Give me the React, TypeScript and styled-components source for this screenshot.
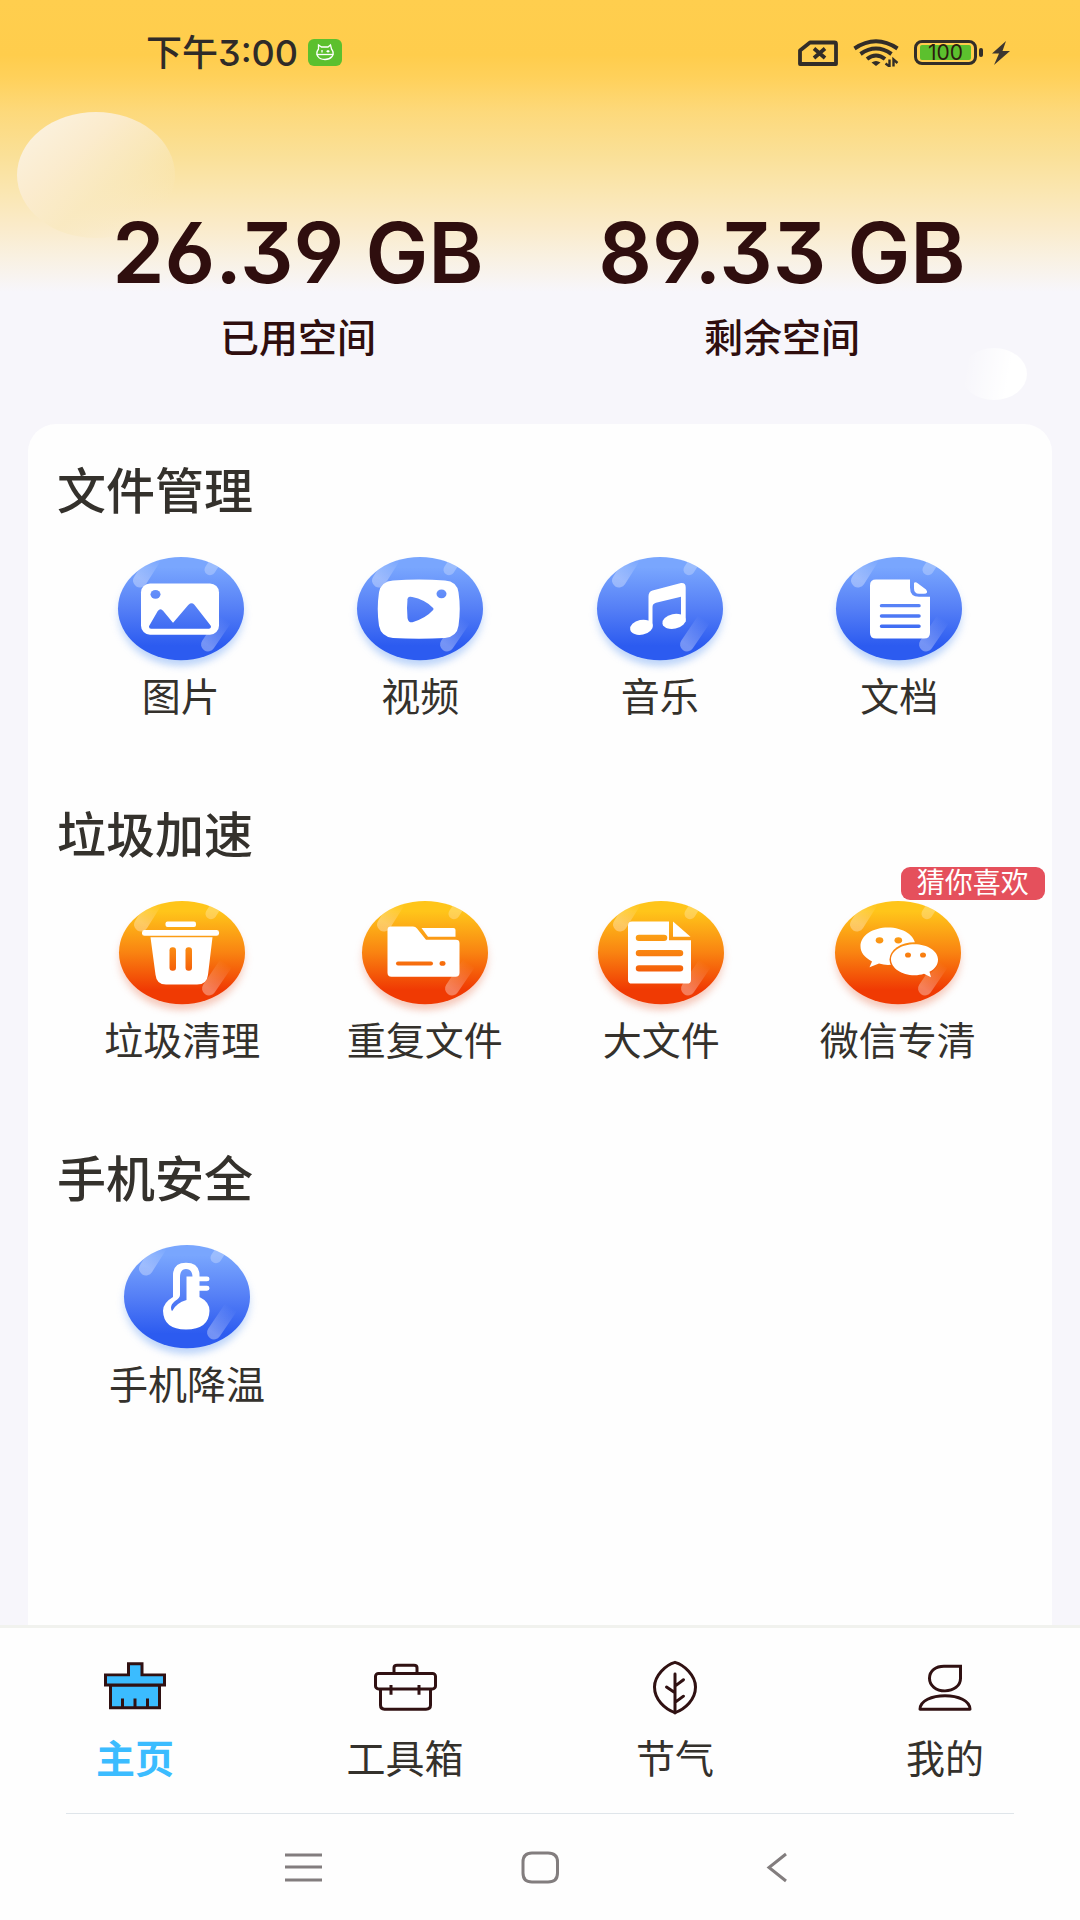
import React, { useId } from 'react';
import styled, { createGlobalStyle } from 'styled-components';

const GlobalStyle = createGlobalStyle`
  *, *::before, *::after { box-sizing: border-box; }
  body {
    margin: 0;
    background: #f7f6fb;
    color: #34312c;
    font-family: Inter, "Noto Sans CJK SC", sans-serif;
  }
  button { font: inherit; color: inherit; background: none; border: 0; padding: 0; cursor: pointer; }
  svg { display: block; }
`;

/* ---------- layout ---------- */

const Page = styled.div`
  min-height: 100vh;
  display: flex;
  flex-direction: column;
`;

const Header = styled.header`
  position: relative;
  padding-bottom: 63px;
  background: linear-gradient(
    #ffce4e 0px, #ffcd4c 55px, #ffd15b 78px, #fdd97b 112px, #fae097 155px,
    #fae6b0 190px, #faebcb 228px, #f9f1e2 258px, #f7f6fb 292px
  );
`;

const Moon = styled.div`
  position: absolute;
  left: 17px;
  top: 112px;
  width: 158px;
  height: 126px;
  border-radius: 50%;
  background: linear-gradient(140deg, #fbf2e0 8%, rgba(251, 236, 208, 0.95) 35%, rgba(249, 233, 192, 0.8) 58%, rgba(250, 234, 198, 0) 84%);
`;

const Bubble = styled.div`
  position: absolute;
  right: 53px;
  top: 348px;
  width: 66px;
  height: 52px;
  border-radius: 50%;
  background: linear-gradient(280deg, #ffffff 30%, rgba(255, 255, 255, 0) 90%);
`;

const StatusBar = styled.div`
  position: relative;
  height: 105px;
  padding: 0 69px 0 146px;
  display: flex;
  align-items: center;
  justify-content: space-between;
`;

const StatusGroup = styled.div<{ $gap: number }>`
  display: flex;
  align-items: center;
  gap: ${(p) => p.$gap}px;
`;

const Clock = styled.time`
  font-size: 36px;
  line-height: 46px;
  font-weight: 500;
  font-feature-settings: "cv09";
  color: #2f2b28;
`;

const Battery = styled.div`
  display: flex;
  align-items: center;
  gap: 2px;
`;

const BatteryShell = styled.div`
  width: 63px;
  height: 25px;
  padding: 2px 3px;
  border: 3px solid #322d28;
  border-radius: 8px;
  display: flex;
`;

const BatteryLevel = styled.span`
  flex: 1;
  display: flex;
  align-items: center;
  justify-content: center;
  border-radius: 2px;
  background: #5cc02e;
  color: #2d1c0e;
  font-size: 21px;
  line-height: 15px;
`;

const BatteryTip = styled.span`
  width: 4px;
  height: 9px;
  border-radius: 2px;
  background: #322d28;
`;

const Storage = styled.section`
  position: relative;
  padding: 98px 56px 0;
  display: grid;
  grid-template-columns: 1fr 1fr;
`;

const StorageItem = styled.div`
  display: flex;
  flex-direction: column;
  align-items: center;
  gap: 12px;
  color: #2f0e0e;
`;

const StorageValue = styled.strong`
  font-size: 84px;
  line-height: 100px;
  font-weight: 600;
  font-feature-settings: "cv03", "cv04", "cv09";
  white-space: nowrap;
`;

const StorageLabel = styled.span`
  font-size: 39px;
  line-height: 46px;
  font-weight: 500;
`;

const Card = styled.main`
  flex: 1;
  margin: 0 28px;
  padding: 40px 0 89px;
  display: flex;
  flex-direction: column;
  gap: 89px;
  background: #fefefe;
  border-radius: 28px 28px 0 0;
`;

const SectionTitle = styled.h2`
  margin: 0;
  padding-left: 29px;
  font-size: 49px;
  line-height: 56px;
  font-weight: 500;
`;

const Row = styled.div<{ $single?: boolean }>`
  margin-top: 33px;
  padding: 0 33px 0 ${(p) => (p.$single ? 81 : 33)}px;
  display: flex;
  justify-content: ${(p) => (p.$single ? 'flex-start' : 'space-around')};
`;

const Tile = styled.button`
  position: relative;
  min-width: 144px;
  display: flex;
  flex-direction: column;
  align-items: center;
`;

const TileLabel = styled.span`
  font-size: 39px;
  line-height: 44px;
`;

const Badge = styled.span`
  position: absolute;
  left: calc(50% + 3px);
  top: -30px;
  width: 144px;
  border-radius: 9px;
  background: #e5505c;
  color: #fff;
  font-size: 28px;
  line-height: 33px;
  text-align: center;
`;

const TabBar = styled.nav`
  padding: 30px 0 31px;
  display: grid;
  grid-template-columns: repeat(4, 1fr);
  border-top: 3px solid #f1f2ee;
  background: #fefefe;
`;

const Tab = styled.button<{ $active?: boolean }>`
  display: flex;
  flex-direction: column;
  align-items: center;
  gap: 20px;
  font-size: 39px;
  line-height: 46px;
  font-weight: ${(p) => (p.$active ? 700 : 400)};
  color: ${(p) => (p.$active ? '#3bbcff' : '#34312c')};
`;

const SystemBar = styled.div`
  background: #fefefe;
  padding: 0 66px;
`;

const SystemButtons = styled.div`
  padding: 35px 0;
  display: flex;
  justify-content: center;
  gap: 198px;
  border-top: 1px solid #dfe5ea;
`;

/* ---------- round icons ---------- */

type Tone = 'blue' | 'orange';

const tones = {
  blue: { top: '#79a6fe', mid: '#557ff6', low: '#2c5bf0', shadow: '#a9c8f8' },
  orange: { top: '#ffc51a', mid: '#f98311', low: '#f03a03', shadow: '#f3b8a6' },
};

function Orb({ tone, children }: { tone: Tone; children: (cut: string) => React.ReactNode }) {
  const id = useId().replace(/[^a-zA-Z0-9]/g, '');
  const t = tones[tone];
  const fill = `url(#${id}g)`;
  return (
    <svg width="144" height="122" viewBox="0 0 144 124" preserveAspectRatio="none" aria-hidden="true">
      <defs>
        <linearGradient id={`${id}g`} gradientUnits="userSpaceOnUse" x1="0" y1="4" x2="0" y2="109">
          <stop offset="0.1" stopColor={t.top} />
          <stop offset="0.5" stopColor={t.mid} />
          <stop offset="0.86" stopColor={t.low} />
        </linearGradient>
        <linearGradient id={`${id}a`} gradientUnits="userSpaceOnUse" x1="30" y1="32" x2="46" y2="6">
          <stop offset="0.2" stopColor="#fff" stopOpacity="0.32" />
          <stop offset="1" stopColor="#fff" stopOpacity="0.02" />
        </linearGradient>
        <linearGradient id={`${id}b`} gradientUnits="userSpaceOnUse" x1="98" y1="97" x2="117" y2="68">
          <stop offset="0.1" stopColor="#fff" stopOpacity="0.34" />
          <stop offset="1" stopColor="#fff" stopOpacity="0" />
        </linearGradient>
        <filter id={`${id}s`} x="-20%" y="-20%" width="140%" height="150%">
          <feGaussianBlur stdDeviation="4" />
        </filter>
        <clipPath id={`${id}c`}>
          <ellipse cx="72" cy="56.5" rx="63" ry="52.5" />
        </clipPath>
      </defs>
      <ellipse cx="72" cy="63" rx="62" ry="52" fill={t.shadow} opacity="0.75" filter={`url(#${id}s)`} />
      <ellipse cx="72" cy="56.5" rx="63" ry="52.5" fill={fill} />
      <g clipPath={`url(#${id}c)`} strokeLinecap="round">
        <path d="M31 28L46 4" stroke={`url(#${id}a)`} strokeWidth="14" />
        <path d="M101 17L108 6" stroke="#fff" strokeOpacity="0.26" strokeWidth="11" />
        <path d="M99 93L115 69" stroke={`url(#${id}b)`} strokeWidth="14" />
      </g>
      {children(fill)}
    </svg>
  );
}

const PictureIcon = () => (
  <Orb tone="blue">
    {(cut) => (
      <>
        <rect x="32" y="31" width="78" height="52" rx="9" fill="#fff" />
        <ellipse cx="46.5" cy="42" rx="5" ry="4.5" fill={cut} />
        <path
          d="M42 75L50.5 60Q51.500 58.500 52.500 60L63 73Q64 74 65 73L81 54Q82.500 52.500 84 54L100 75Z"
          fill={cut}
          stroke={cut}
          strokeWidth="4"
          strokeLinejoin="round"
        />
      </>
    )}
  </Orb>
);

const VideoIcon = () => (
  <Orb tone="blue">
    {(cut) => (
      <>
        <path d="M45 28Q71 26 97 28Q109 29 110.5 40Q113 57 110.5 74Q109 85 97 86.5Q71 88 45 86.5Q33 85 31 74Q28.5 57 31 40Q33 29 45 28Z" fill="#fff" />
        <path d="M61 47Q61 45.500 63 46Q77 49 84 57Q77 65 64 69Q61.5 69 61 66Q60 56 61 47Z" fill={cut} stroke={cut} strokeWidth="3" strokeLinejoin="round" />
        <ellipse cx="93.5" cy="41.5" rx="5" ry="4.5" fill={cut} />
      </>
    )}
  </Orb>
);

const MusicIcon = () => (
  <Orb tone="blue">
    {() => (
      <g fill="#fff">
        <path d="M60.500 75V44Q60.500 39 64.500 38L93 30.500Q97.700 30 97.700 35V70H93V44.500L68 50.500Q64.500 51.500 64.500 55V75Z" />
        <ellipse cx="53.5" cy="75.5" rx="11.5" ry="7.5" transform="rotate(-12 53.5 75.5)" />
        <ellipse cx="86" cy="69.5" rx="11.8" ry="7.5" transform="rotate(-12 86 69.5)" />
      </g>
    )}
  </Orb>
);

const DocumentIcon = () => (
  <Orb tone="blue">
    {(cut) => (
      <>
        <path d="M49 27H83V35Q83 44.500 92 44.500H103V81Q103 87 97 87H49Q43 87 43 81V33Q43 27 49 27Z" fill="#fff" />
        <path d="M87 30.500Q88 28.500 91 31L99 37Q102 41 97 41.500H92Q87 41 87 36Z" fill="#fff" />
        <path d="M54.500 53.500H92M54.500 64H92M54.500 74.500H92" stroke={cut} strokeWidth="3.500" strokeLinecap="round" />
      </>
    )}
  </Orb>
);

const TrashIcon = () => (
  <Orb tone="orange">
    {(cut) => (
      <>
        <g fill="#fff">
          <rect x="55.5" y="25" width="30.5" height="5.5" rx="2" />
          <rect x="32" y="33.5" width="77" height="6" rx="2.5" />
          <path d="M40.500 41H102.500L98 79Q97 89 87 89H56Q46.500 89 45.500 79Z" />
        </g>
        <rect x="59.5" y="51" width="6.5" height="24" rx="3" fill={cut} />
        <rect x="75.5" y="51" width="6.5" height="24" rx="3" fill={cut} />
      </>
    )}
  </Orb>
);

const FolderIcon = () => (
  <Orb tone="orange">
    {(cut) => (
      <>
        <path d="M38 30H60Q62.500 30 64 32L73 43.500H103Q106.500 43.500 106.500 47V77Q106.500 81 102.500 81H38.500Q34.500 81 34.500 77V33.500Q34.500 30 38 30Z" fill="#fff" />
        <path d="M68.500 31.500H100.500Q102.500 31.500 102.500 33.500V40.500H75Z" fill="#fff" />
        <path d="M45 67.500H78" stroke={cut} strokeWidth="4" strokeLinecap="round" />
        <ellipse cx="89.5" cy="67.5" rx="3" ry="2.5" fill={cut} />
      </>
    )}
  </Orb>
);

const BigFileIcon = () => (
  <Orb tone="orange">
    {(cut) => (
      <>
        <path d="M43 25H80V44H102V84Q102 88 98 88H43Q39 88 39 84V29Q39 25 43 25Z" fill="#fff" />
        <path d="M84 25L101.500 40.500H84Z" fill="#fff" />
        <path d="M50 41.500H75M50 57H91M50 72.500H91" stroke={cut} strokeWidth="6.500" strokeLinecap="round" />
      </>
    )}
  </Orb>
);

const WechatIcon = () => (
  <Orb tone="orange">
    {(cut) => (
      <>
        <path d="M62 31C47 31 34.500 39 34.500 50C34.500 56 38 61 46 65.500L43.500 71.500L53 67.500C56 68.500 59 69 62 69C77 69 89.500 61 89.500 50C89.500 39 77 31 62 31Z" fill="#fff" />
        <ellipse cx="88.5" cy="63.5" rx="25" ry="17.5" fill={cut} />
        <path d="M88.500 48C75.500 48 65 55 65 63.500C65 72 75.500 79.500 88.500 79.500C92 79.500 95 79 98 78L105 81.500L103.500 76C109 73 112 69 112 63.500C112 55 101.500 48 88.500 48Z" fill="#fff" />
        <g fill={cut}>
          <ellipse cx="53.5" cy="44" rx="3.8" ry="3.2" />
          <ellipse cx="72.3" cy="44" rx="3.8" ry="3.2" />
          <ellipse cx="82" cy="59" rx="3" ry="2.6" />
          <ellipse cx="97" cy="59" rx="3" ry="2.6" />
        </g>
      </>
    )}
  </Orb>
);

const ThermometerIcon = () => (
  <Orb tone="blue">
    {(cut) => (
      <>
        <path d="M58 35Q58 22 71 22Q84.500 22 84.500 35V57Q94.500 62 94.500 71Q94 90 71 90Q48.500 90 48 71Q48 63 58 57Z" fill="#fff" />
        <path d="M83 38.500H92M83 48H92" stroke="#fff" strokeWidth="5" strokeLinecap="round" />
        <path d="M65 37Q65 28.500 71 28.500Q77 28.500 77.500 36H71.500V60Q61 63 57 71.500Q54 66 60 61Q65 58 65 55Z" fill={cut} />
      </>
    )}
  </Orb>
);

/* ---------- tab icons ---------- */

function LineIcon({ children }: { children: React.ReactNode }) {
  return (
    <svg
      width="64"
      height="58"
      viewBox="0 0 64 60"
      preserveAspectRatio="none"
      fill="none"
      stroke="#301112"
      strokeWidth="3"
      aria-hidden="true"
    >
      {children}
    </svg>
  );
}

const BrushIcon = () => (
  <LineIcon>
    <path d="M7.500 28H56.500V51.500H7.500Z" fill="#3bbcff" />
    <path d="M25.500 6H39V17.500H61.500V28H2.500V17.500H25.500Z" fill="#3bbcff" />
    <path d="M19.500 42V52M32 42V52M44.500 42V52" />
  </LineIcon>
);

const ToolboxIcon = () => (
  <LineIcon>
    <path d="M21 16V10Q21 7.500 24 7.500H41Q44 7.500 44 10V16" />
    <rect x="2.5" y="16" width="60" height="16" rx="3" />
    <path d="M7.500 32V49Q7.500 53 11.500 53H53Q57.500 53 57.500 49V32" />
    <path d="M18 28V38M46 28V38" />
  </LineIcon>
);

const LeafIcon = () => (
  <LineIcon>
    <path d="M32 4.500C41 7 52.500 18 52.500 30C52.500 43 42 53 32 56.500C22 53 11.500 43 11.500 30C11.500 18 23 7 32 4.500Z" />
    <path d="M32 16.500V57M32 29L40.500 22.500M32 36L23.500 30M32 46L40.500 39.500" strokeLinecap="round" />
  </LineIcon>
);

const PersonIcon = () => (
  <LineIcon>
    <path d="M31 8.500H47.500V21C47.500 29 40.500 34 32 34C23 34 16.500 28.500 16.500 21C16.500 13 23 8.500 31 8.500Z" />
    <path d="M7 53C7 44 19 39 32 39C45 39 57 44 57 53Z" strokeLinejoin="round" />
  </LineIcon>
);

/* ---------- status icons ---------- */

const CatIcon = () => (
  <svg width="34" height="27" viewBox="0 0 34 27" aria-hidden="true">
    <rect width="34" height="27" rx="6" fill="#5cc02e" />
    <g fill="none" stroke="#fff" strokeWidth="1.3">
      <path d="M10.500 10L10.500 6L13.500 8H20L22.500 6L23.500 10Q26.500 14 24 17.500Q21.500 20.500 17 20.500Q12 20.500 10 17.500Q7.500 14 10.500 10Z" />
      <path d="M8.500 15.500H25.500" />
      <path d="M14 11V13.500M20 11V13.500M18.500 12.300H21.500" />
    </g>
  </svg>
);

const SimIcon = () => (
  <svg width="40" height="26" viewBox="0 0 40 26" fill="none" stroke="#322d28" aria-hidden="true">
    <path d="M12 2.500H36.500Q38 2.500 38 4V24H2V10.500Z" strokeWidth="3.8" strokeLinejoin="round" />
    <path d="M16 8.500L27 18M27 8.500L16 18" strokeWidth="3.8" />
  </svg>
);

const WifiIcon = () => (
  <svg width="46" height="28" viewBox="0 0 46 28" fill="none" stroke="#322d28" strokeWidth="4" aria-hidden="true">
    <path d="M1.500 9.500Q23 -5 44.500 9.500" />
    <path d="M7.500 15Q23 4 38.500 15" />
    <path d="M14 20Q23 13 32 20" />
    <path d="M23 27L18.500 23.500Q23 20.500 27.500 23.500Z" fill="#322d28" stroke="none" />
    <path d="M36.500 20.500V27.500L32.500 24.500M40.500 27.500V20.500L44.500 24" strokeWidth="2.4" />
  </svg>
);

const BoltIcon = () => (
  <svg width="26" height="24" viewBox="0 0 26 24" aria-hidden="true">
    <path d="M21 0L7 12.500H14L9 24L25 10H17.500Z" fill="#3c3630" />
  </svg>
);

/* ---------- system icons ---------- */

const systemIcons = [
  { label: '最近任务', path: 'M1 6H38M1 18H38M1 31H38' },
  { label: '主屏幕', path: 'M11 4H27Q36.500 4 36.500 13V24Q36.500 33 27 33H11Q2 33 2 24V13Q2 4 11 4Z' },
  { label: '返回', path: 'M28 5L11 18.500L28 32' },
];

/* ---------- content ---------- */

const sections = [
  {
    title: '文件管理',
    items: [
      { label: '图片', Icon: PictureIcon },
      { label: '视频', Icon: VideoIcon },
      { label: '音乐', Icon: MusicIcon },
      { label: '文档', Icon: DocumentIcon },
    ],
  },
  {
    title: '垃圾加速',
    items: [
      { label: '垃圾清理', Icon: TrashIcon },
      { label: '重复文件', Icon: FolderIcon },
      { label: '大文件', Icon: BigFileIcon },
      { label: '微信专清', Icon: WechatIcon, badge: '猜你喜欢' },
    ],
  },
  {
    title: '手机安全',
    items: [{ label: '手机降温', Icon: ThermometerIcon }],
  },
] as { title: string; items: { label: string; Icon: React.FC; badge?: string }[] }[];

const tabs = [
  { label: '主页', Icon: BrushIcon },
  { label: '工具箱', Icon: ToolboxIcon },
  { label: '节气', Icon: LeafIcon },
  { label: '我的', Icon: PersonIcon },
];

const storage = [
  { value: '26.39 GB', label: '已用空间' },
  { value: '89.33 GB', label: '剩余空间' },
];

export default function App() {
  return (
    <>
      <GlobalStyle />
      <Page>
        <Header>
          <Moon />
          <Bubble />
          <StatusBar>
            <StatusGroup $gap={10}>
              <Clock>下午3:00</Clock>
              <CatIcon />
            </StatusGroup>
            <StatusGroup $gap={15}>
              <SimIcon />
              <WifiIcon />
              <Battery>
                <BatteryShell>
                  <BatteryLevel>100</BatteryLevel>
                </BatteryShell>
                <BatteryTip />
                <BoltIcon />
              </Battery>
            </StatusGroup>
          </StatusBar>
          <Storage>
            {storage.map((s) => (
              <StorageItem key={s.label}>
                <StorageValue>{s.value}</StorageValue>
                <StorageLabel>{s.label}</StorageLabel>
              </StorageItem>
            ))}
          </Storage>
        </Header>
        <Card>
          {sections.map(({ title, items }) => (
            <section key={title}>
              <SectionTitle>{title}</SectionTitle>
              <Row $single={items.length === 1}>
                {items.map(({ label, Icon, badge }) => (
                  <Tile key={label} type="button">
                    <Icon />
                    <TileLabel>{label}</TileLabel>
                    {badge && <Badge>{badge}</Badge>}
                  </Tile>
                ))}
              </Row>
            </section>
          ))}
        </Card>
        <TabBar>
          {tabs.map(({ label, Icon }, i) => (
            <Tab key={label} type="button" $active={i === 0}>
              <Icon />
              <span>{label}</span>
            </Tab>
          ))}
        </TabBar>
        <SystemBar>
          <SystemButtons>
            {systemIcons.map(({ label, path }) => (
              <button key={label} type="button" aria-label={label}>
                <svg width="39" height="36" viewBox="0 0 39 36" fill="none" stroke="#827d7e" strokeWidth="3">
                  <path d={path} />
                </svg>
              </button>
            ))}
          </SystemButtons>
        </SystemBar>
      </Page>
    </>
  );
}
